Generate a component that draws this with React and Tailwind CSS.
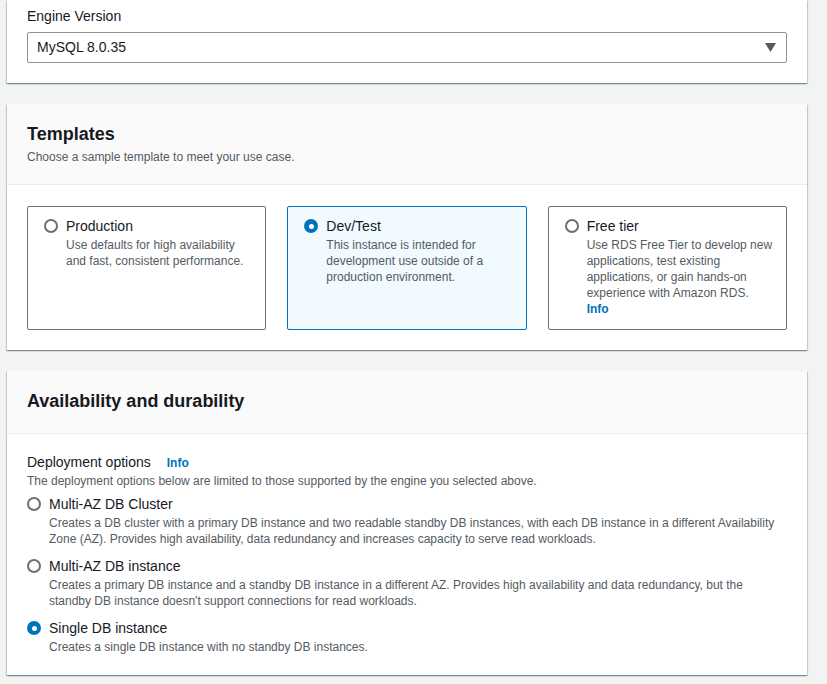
import React from 'react';

const font = { fontFamily: '"Liberation Sans", Arial, sans-serif' };

const Radio = ({ checked }) =>
  checked ? (
    <span className="mt-[4px] flex h-[14px] w-[14px] shrink-0 items-center justify-center rounded-full bg-[#0073bb]">
      <span className="h-[5px] w-[5px] rounded-full bg-white" />
    </span>
  ) : (
    <span className="mt-[4px] h-[14px] w-[14px] shrink-0 rounded-full border-2 border-[#687078] bg-white" />
  );

const Panel = ({ className = '', children }) => (
  <div
    className={`bg-white shadow-[0_1px_1px_0_rgba(0,28,36,0.3),1px_1px_1px_0_rgba(0,28,36,0.15),-1px_1px_1px_0_rgba(0,28,36,0.15)] ${className}`}
  >
    {children}
  </div>
);

const templates = [
  {
    title: 'Production',
    desc: 'Use defaults for high availability and fast, consistent performance.',
  },
  {
    title: 'Dev/Test',
    desc: 'This instance is intended for development use outside of a production environment.',
    checked: true,
  },
  {
    title: 'Free tier',
    desc: 'Use RDS Free Tier to develop new applications, test existing applications, or gain hands-on experience with Amazon RDS.',
    info: true,
  },
];

const deployments = [
  {
    title: 'Multi-AZ DB Cluster',
    desc: 'Creates a DB cluster with a primary DB instance and two readable standby DB instances, with each DB instance in a different Availability Zone (AZ). Provides high availability, data redundancy and increases capacity to serve read workloads.',
  },
  {
    title: 'Multi-AZ DB instance',
    desc: "Creates a primary DB instance and a standby DB instance in a different AZ. Provides high availability and data redundancy, but the standby DB instance doesn't support connections for read workloads.",
  },
  {
    title: 'Single DB instance',
    desc: 'Creates a single DB instance with no standby DB instances.',
    checked: true,
  },
];

export default function App() {
  return (
    <div className="min-h-[684px] bg-[#f2f3f3] pl-[7px] pr-[20px] text-[#16191f]" style={font}>
      {/* Engine version (top cut off) */}
      <Panel className="px-[20px] pb-[20px] pt-[5px]">
        <div className="text-[14px] leading-[22px]">Engine Version</div>
        <div className="mt-[5px] flex h-[31px] items-center justify-between rounded-[2px] border border-[#879596] pl-[9px] pr-[10px]">
          <span className="text-[14px]">MySQL 8.0.35</span>
          <svg width="11" height="9" viewBox="0 0 11 9">
            <path d="M0 0h11L5.5 9z" fill="#545b64" />
          </svg>
        </div>
      </Panel>

      {/* Templates */}
      <Panel className="mt-[21px]">
        <div className="border-b border-[#eaeded] bg-[#fafafa] px-[20px] pb-[19px] pt-[18px]">
          <h2 className="text-[18px] font-bold leading-[24px]">Templates</h2>
          <p className="mt-[3px] text-[12px] leading-[16px] text-[#545b64]">
            Choose a sample template to meet your use case.
          </p>
        </div>
        <div className="grid grid-cols-3 gap-[21px] px-[20px] pb-[20px] pt-[21px]">
          {templates.map((t) => (
            <div
              key={t.title}
              className={`flex h-[124px] gap-[8px] rounded-[2px] border pl-[16px] pr-[8px] pt-[8px] ${
                t.checked ? 'border-[#0073bb] bg-[#f1faff]' : 'border-[#687078] bg-white'
              }`}
            >
              <Radio checked={t.checked} />
              <div>
                <div className="text-[14px] leading-[22px]">{t.title}</div>
                <div className="text-[12px] leading-[16px] text-[#545b64]">{t.desc}</div>
                {t.info && (
                  <div className="text-[12px] font-bold leading-[16px] text-[#0073bb]">Info</div>
                )}
              </div>
            </div>
          ))}
        </div>
      </Panel>

      {/* Availability and durability */}
      <Panel className="mt-[21px]">
        <div className="border-b border-[#eaeded] bg-[#fafafa] px-[20px] pb-[19px] pt-[18px]">
          <h2 className="text-[18px] font-bold leading-[25px]">Availability and durability</h2>
        </div>
        <div className="px-[20px] pb-[20px] pt-[17px]">
          <div className="flex items-baseline gap-[16px]">
            <span className="text-[14px] leading-[22px]">Deployment options</span>
            <span className="text-[12px] font-bold text-[#0073bb]">Info</span>
          </div>
          <p className="text-[12px] leading-[16px] text-[#545b64]">
            The deployment options below are limited to those supported by the engine you selected above.
          </p>
          <div className="mt-[4px] flex flex-col gap-[8px]">
            {deployments.map((d) => (
              <div key={d.title} className="flex gap-[8px]">
                <Radio checked={d.checked} />
                <div>
                  <div className="text-[14px] leading-[22px]">{d.title}</div>
                  <div className="text-[12px] leading-[16px] text-[#545b64]">{d.desc}</div>
                </div>
              </div>
            ))}
          </div>
        </div>
      </Panel>
    </div>
  );
}
